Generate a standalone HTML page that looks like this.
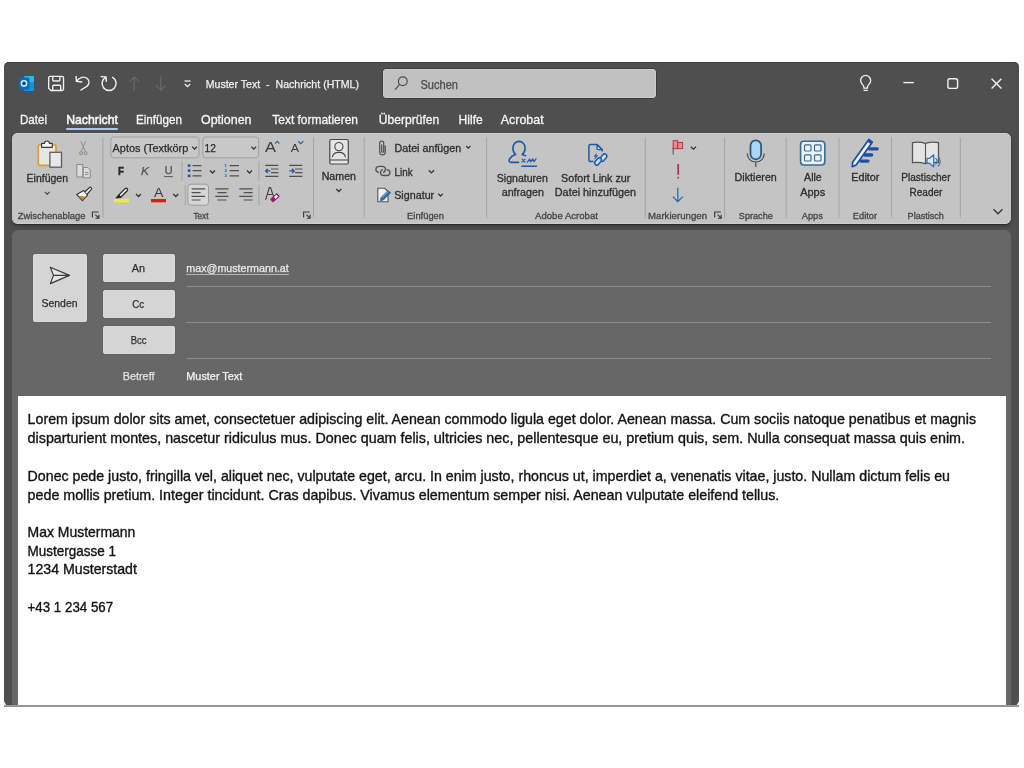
<!DOCTYPE html>
<html><head><meta charset="utf-8"><title>Muster Text - Nachricht (HTML)</title>
<style>
html,body{margin:0;padding:0;background:#fff;width:1024px;height:768px;overflow:hidden;font-family:"Liberation Sans", sans-serif;}
.abs{position:absolute;}
#win{left:4px;top:62px;width:1015px;height:644px;background:#4f4f4f;border-radius:5px 5px 6px 6px;box-shadow:inset 0 1px 0 #3e3e3e;}
#search{left:383px;top:69px;width:273px;height:29px;background:#c1c1c1;border-radius:4px;box-shadow:0 0 0 1px #3c3c3c, inset 0 0 0 1px #cbcbcb;}
#tabline{left:66px;top:127.5px;width:52px;height:2px;background:#a9c6e6;border-radius:1px;}
#ribbon{left:12px;top:133px;width:999px;height:91px;background:#c4c4c4;border-radius:6px;box-shadow:0 1px 0 #2c2c2c, 0 2px 4px rgba(0,0,0,0.3), inset 0 1px 0 #d0d0d0, inset 0 -1px 0 #cdcdcd;}
#compose{left:12px;top:230px;width:999px;height:476px;background:#676767;border-radius:6px 6px 0 0;}
.btn{background:#d5d5d5;border-radius:3px;box-shadow:inset 0 0 0 1px #dadada, 0 0 0 0.5px #5c5c5c;}
.hl{left:186px;width:805px;height:1px;background:#8e8e8e;}
#body{left:17.5px;top:395.5px;width:988px;height:310px;background:#fff;}
#bline{left:4px;top:705px;width:1015px;height:2px;background:#979797;}
svg{position:absolute;left:0;top:0;will-change:transform;}
</style></head><body>
<div id="win" class="abs"></div>
<div id="search" class="abs"></div>
<div id="tabline" class="abs"></div>
<div id="ribbon" class="abs"></div>
<div id="compose" class="abs"></div>
<div class="abs btn" style="left:33px;top:253.5px;width:53.5px;height:68px;"></div>
<div class="abs btn" style="left:102.5px;top:253.5px;width:72px;height:28px;"></div>
<div class="abs btn" style="left:102.5px;top:289.5px;width:72px;height:28px;"></div>
<div class="abs btn" style="left:102.5px;top:325.5px;width:72px;height:28px;"></div>
<div class="abs hl" style="top:286px"></div>
<div class="abs hl" style="top:322px"></div>
<div class="abs hl" style="top:358px"></div>
<div class="abs" style="left:186px;top:274px;width:103px;height:1px;background:#b4b4b4"></div>
<div id="body" class="abs"></div>
<div id="bline" class="abs"></div>
<svg width="1024" height="768" viewBox="0 0 1024 768" font-family='"Liberation Sans", sans-serif'>

<!-- Outlook logo -->
<rect x="24" y="76" width="10" height="15" rx="1" fill="#2fb4ee"/>
<path d="M24 84l10-2.5v9.5h-10z" fill="#1c8fd8"/>
<rect x="19.3" y="77.4" width="10.2" height="12.4" rx="2" fill="#0f68c0"/>
<circle cx="24" cy="83.4" r="2.6" fill="#0a3f80" stroke="#c4eeff" stroke-width="1.6"/>
<!-- save -->
<g fill="none" stroke="#f2f2f2" stroke-width="1.35" stroke-linejoin="round">
<path d="M50.3 76.4h11.8a1.4 1.4 0 0 1 1.4 1.4v11.3a1.4 1.4 0 0 1-1.4 1.4h-11.2l-2.2-2.2v-10.5a1.4 1.4 0 0 1 1.4-1.4z"/>
<path d="M52.7 76.5v3.6a0.9 0.9 0 0 0 0.9 0.9h5.4a0.9 0.9 0 0 0 0.9-0.9v-3.6"/>
<path d="M52.7 90.4v-4.2a1 1 0 0 1 1-1h6a1 1 0 0 1 1 1v4.2"/>
</g>
<!-- undo -->
<g fill="none" stroke="#f2f2f2" stroke-width="1.45" stroke-linecap="round" stroke-linejoin="round">
<path d="M76.6 81.2C79.5 77.2 84.2 75.8 87.3 78.6C89.6 80.8 89.2 84 87.2 86.1L81 90"/>
<path d="M76.1 76.5L76.4 81.4L81.8 82"/>
</g>
<!-- redo -->
<g fill="none" stroke="#f2f2f2" stroke-width="1.45" stroke-linecap="round" stroke-linejoin="round">
<path d="M105.6 77.4A7 7 0 1 0 112.6 77.4"/>
<path d="M101.3 76.6L106 76.9L106.3 81.2"/>
</g>
<!-- up/down dim -->
<g fill="none" stroke="#686868" stroke-width="1.2" stroke-linecap="round">
<path d="M134.2 90.6v-13.6M129.6 81.6l4.6-4.6l4.6 4.6"/>
<path d="M160.7 76.3v13.8M156 85.4l4.7 4.7l4.7-4.7"/>
</g>
<!-- customize -->
<g fill="none" stroke="#f0f0f0" stroke-width="1.3">
<path d="M184.5 81h6"/><path d="M184.8 84l2.7 2.7l2.7-2.7"/>
</g>
<!-- search -->
<g fill="none" stroke="#4a4a4a" stroke-width="1.2" stroke-linecap="round">
<circle cx="402.8" cy="81.2" r="4.4"/><path d="M399.6 84.4l-4.3 4.9"/>
</g>
<!-- bulb -->
<g fill="none" stroke="#f2f2f2" stroke-width="1.3" stroke-linecap="round" stroke-linejoin="round">
<path d="M863.8 88.2v-1.6c0-1.6-3.2-3-3.2-6.1a5.05 5.05 0 0 1 10.1 0c0 3.1-3.2 4.5-3.2 6.1v1.6z"/>
<path d="M864.2 90.4h3"/>
</g>
<!-- min max close -->
<g fill="none" stroke="#f2f2f2" stroke-width="1.4">
<path d="M903.4 82.6h10.4"/>
<rect x="947.9" y="78.8" width="9.7" height="9.6" rx="2"/>
<path d="M991.6 78.8l9.8 9.8M1001.4 78.8l-9.8 9.8"/>
</g>


<!-- paste clipboard -->
<rect x="38.3" y="144.8" width="17.7" height="20.6" rx="1.5" fill="#e6e6e6" stroke="#d2a232" stroke-width="1.7"/>
<path d="M41.6 147.3V143.4H44.5A2.45 2.45 0 0 1 49.4 143.4H52.3V147.3Z" fill="#fafafa" stroke="#3a3a3a" stroke-width="1.15" stroke-linejoin="round"/>
<rect x="49.9" y="152.3" width="11.6" height="14.9" fill="#e8e8e8" stroke="#5e5e5e" stroke-width="1.3"/>
<!-- chevron -->
<g fill="none" stroke="#444" stroke-width="1.1">
<path d="M44.8 191.8l2.4 2.4l2.4-2.4"/>
</g>
<!-- scissors -->
<g fill="none" stroke="#8c8c8c" stroke-width="1">
<path d="M80.9 141.2L85.4 151.6M85.7 141.2L81.2 151.6"/>
<circle cx="81" cy="153.2" r="1.5"/><circle cx="85.6" cy="153.2" r="1.5"/>
</g>
<!-- copy -->
<g fill="#dcdcdc" stroke="#8a8a8a" stroke-width="1">
<rect x="76.8" y="164.5" width="6" height="12.5"/>
<path d="M83.3 167.5h4.5l2.5 2.5v7.8h-7z"/>
<path d="M85 172.5h3.5M85 174.5h3.5" fill="none"/>
</g>
<!-- format painter -->
<path d="M76.7 194.4L83.7 190.5L87.6 195.2L82.4 200.7Z" fill="#f4f4f4" stroke="#333" stroke-width="1.15" stroke-linejoin="round"/>
<path d="M78 195.4L86.1 196.7L82.4 200.1Z" fill="#b88f2c"/>
<path d="M84.9 191.7L89.3 187.7A1.3 1.3 0 0 1 91.2 189.6L87.2 194" fill="#f0f0f0" stroke="#333" stroke-width="1.15" stroke-linejoin="round"/>
<!-- launchers -->
<g transform="translate(92,212)"><path d="M0.4 5.6V0H6.6M3.3 2.6L6.3 5.6M3.6 6.2H6.9V2.8" fill="none" stroke="#383838" stroke-width="1.15"/></g>
<g transform="translate(303.2,212)"><path d="M0.4 5.6V0H6.6M3.3 2.6L6.3 5.6M3.6 6.2H6.9V2.8" fill="none" stroke="#383838" stroke-width="1.15"/></g>
<g transform="translate(714.3,212)"><path d="M0.4 5.6V0H6.6M3.3 2.6L6.3 5.6M3.6 6.2H6.9V2.8" fill="none" stroke="#383838" stroke-width="1.15"/></g>
<!-- separators -->
<g stroke="#a4a4a4" stroke-width="1">
<path d="M102.9 137.5v80"/><path d="M313.5 137.5v80"/><path d="M364.2 137.5v80"/><path d="M486.6 137.5v80"/>
<path d="M645.3 137.5v80"/><path d="M724.6 137.5v80"/><path d="M786.2 137.5v80"/><path d="M839 137.5v80"/>
<path d="M891.5 137.5v80"/><path d="M960.3 137.5v80"/>
<path d="M182 161v20M258.9 161v20M185.3 185v20.5M258.9 185v20.5"/>
</g>
<!-- combo boxes -->
<rect x="110.8" y="137" width="88.2" height="20.8" rx="3" fill="#c8c8c8" stroke="#a0a0a0" stroke-width="1"/>
<rect x="202.8" y="137" width="55.8" height="20.8" rx="3" fill="#c8c8c8" stroke="#a0a0a0" stroke-width="1"/>
<g fill="none" stroke="#333" stroke-width="1.25">
<path d="M192.3 146.8l2.3 2.3l2.3-2.3"/><path d="M251.5 146.8l2.3 2.3l2.3-2.3"/>
<path d="M210 170.5l2.5 2.5l2.5-2.5"/><path d="M247 170.5l2.5 2.5l2.5-2.5"/>
<path d="M136 194l2.5 2.5l2.5-2.5"/><path d="M173.3 194l2.5 2.5l2.5-2.5"/>
<path d="M466.2 146l2.1 2.1l2.1-2.1"/><path d="M428.8 170.3l2.6 2.6l2.6-2.6"/><path d="M438.3 193.8l2.2 2.2l2.2-2.2"/>
<path d="M336.3 189l2.5 2.5l2.5-2.5"/><path d="M690.8 146.8l2.6 2.4l2.6-2.4"/>
<path d="M993.5 209.3l4.5 4.5l4.5-4.5"/>
</g>
<!-- grow/shrink font -->
<text x="265" y="151.8" font-size="15" fill="#3a3a3a" font-family='"Liberation Sans", sans-serif' textLength="11" lengthAdjust="spacingAndGlyphs">A</text>
<text x="290.8" y="151.8" font-size="11.5" fill="#3a3a3a" font-family='"Liberation Sans", sans-serif' textLength="8.3" lengthAdjust="spacingAndGlyphs">A</text>
<g fill="none" stroke="#2a649a" stroke-width="1.3">
<path d="M275 143.6l2.2-2.2l2.2 2.2"/><path d="M298.3 141.3l2.5 2.4l2.5-2.4"/>
</g>
<!-- bullets -->
<g transform="translate(0,0.7)">

<g fill="#1a5a9e"><rect x="187.8" y="163.6" width="2.6" height="2.6"/><rect x="187.8" y="168.6" width="2.6" height="2.6"/><rect x="187.8" y="173.8" width="2.6" height="2.6"/></g>
<g stroke="#505050" stroke-width="1.2"><path d="M192.5 164.9h9M192.5 169.9h9M192.5 175.1h9"/></g>
<g fill="#1a5a9e" font-size="4.2" font-family='"Liberation Sans", sans-serif' font-weight="700"><text x="224.5" y="166.5">1</text><text x="224.5" y="171.6">2</text><text x="224.5" y="176.7">3</text></g>
<g stroke="#505050" stroke-width="1.2"><path d="M229.6 164.9h9.4M229.6 170h9.4M229.6 175.2h9.4"/></g>
<!-- indent -->
<g stroke="#505050" stroke-width="1.2"><path d="M265.2 164.6h13.2M271 168.3h7.4M271 172h7.4M265.2 175.7h13.2"/>
<path d="M289.2 164.6h13.2M295 168.3h7.4M295 172h7.4M289.2 175.7h13.2"/></g>
<g stroke="#1a5a9e" stroke-width="1.3" fill="none"><path d="M265.5 170.2h4.8M267.8 168l-2.2 2.2l2.2 2.2"/>
<path d="M289.3 170.2h4.5M292 168l2.2 2.2l-2.2 2.2"/></g>
</g>
<path d="M164.2 176.6h8.6" stroke="#555" stroke-width="1"/>
<!-- highlight pen -->
<path d="M118.6 195.2l6.6-6.6a1.5 1.5 0 0 1 2.1 2.1l-6.6 6.6z" fill="#f6f6f6" stroke="#2a2a2a" stroke-width="1.3" stroke-linejoin="round"/>
<path d="M115.8 198.2l2.6-3.2l2.4 2.4z" fill="#1a1a1a" stroke="#1a1a1a" stroke-width="0.6"/>
<rect x="113.8" y="199" width="15.2" height="3.4" fill="#f2ec2a"/>
<!-- font color -->
<text x="154" y="197" font-size="12.5" fill="#3a3a3a" font-family='"Liberation Sans", sans-serif' textLength="9.4" lengthAdjust="spacingAndGlyphs">A</text>
<rect x="151" y="199" width="15" height="3.3" fill="#e21a1a"/>
<!-- align left button -->
<rect x="188" y="184.2" width="20.5" height="21" rx="3" fill="#d6d6d6" stroke="#9c9c9c" stroke-width="1"/>
<g stroke="#505050" stroke-width="1.2" transform="translate(0,0.3)">
<path d="M191.6 188.6h13.5M191.6 192.3h9M191.6 196h13.5M191.6 199.7h9"/>
<path d="M215.3 188.6h13.2M217.5 192.3h9M215.3 196h13.2M217.5 199.7h9"/>
<path d="M239.3 188.6h13.2M243.6 192.3h9M239.3 196h13.2M243.6 199.7h9"/>
</g>
<!-- clear formatting -->
<path d="M265.6 199.8l3.7-12.2h1.2l3.2 9.4M267.3 194.5h4.6" fill="none" stroke="#404040" stroke-width="1.1"/>
<rect x="270.2" y="195.5" width="9.4" height="4.6" rx="0.8" transform="rotate(-42 274.9 197.8)" fill="#931c6e"/>
<rect x="274.6" y="196.6" width="3.6" height="2.4" transform="rotate(-42 274.9 197.8)" fill="#f6eef4"/>
<!-- Namen book -->
<rect x="329.8" y="139.5" width="18.5" height="24.5" rx="1.5" fill="#e4e4e4" stroke="#4a4a4a" stroke-width="1.2"/>
<path d="M330 160h18" stroke="#4a4a4a" stroke-width="1.1"/>
<circle cx="338.9" cy="146.6" r="4.1" fill="none" stroke="#4a4a4a" stroke-width="1.15"/>
<path d="M332.4 157.3C332.8 154.1 335.5 152.4 338.9 152.4C342.3 152.4 345 154.1 345.4 157.3" fill="none" stroke="#4a4a4a" stroke-width="1.15"/>
<!-- paperclip -->
<path d="M384.8 146v6.5a2.8 2.8 0 0 1-5.6 0v-9a2 2 0 0 1 4 0v8.2a1 1 0 0 1-2 0v-6.7" fill="none" stroke="#555" stroke-width="1.25" transform="translate(0.5,-0.5)"/>
<!-- link -->
<g fill="none" stroke="#505050" stroke-width="1.35" stroke-linecap="round">
<path d="M378.4 172.4C376.7 172 375.9 170.8 375.9 169.5C375.9 167.6 377.4 166.4 379.5 166.4H382C384 166.4 385.4 167.8 385.4 169.5C385.4 170.8 384.6 171.8 383.5 172.3"/>
<path d="M387.1 169.6C389 170 389.9 171.1 389.9 172.5C389.9 174.4 388.5 175.5 386.5 175.5H384C382 175.5 380.5 174.3 380.5 172.5C380.5 171.2 381.3 170.2 382.4 169.7"/>
</g>
<!-- signature -->
<path d="M377.8 188.2h6.8l3.4 3.4v10.2h-10.2z" fill="#f0f0f0" stroke="#555" stroke-width="1.1" stroke-linejoin="round"/>
<path d="M380.3 200.8L381 197.6L388.2 190.4L390.6 192.8L383.4 200Z" fill="#2e6cb0" stroke="#1f5a9a" stroke-width="0.7" stroke-linejoin="round"/>
<path d="M382.2 197.6L388.4 191.4" stroke="#cfe2f6" stroke-width="0.6"/>
<!-- Signaturen anfragen -->
<path d="M518.5 162.4H511.2C509.2 162.4 508.6 160.6 509.6 159C511 156.6 513.4 155.2 515.6 154.6C513.7 152.9 512.9 150.6 512.9 148C512.9 144.3 515.6 141.4 519 141.4C522.4 141.4 525.1 144.3 525.1 148C525.1 150.6 524.1 152.9 522.2 154.6C523.2 155 524.5 155.5 525.6 155.7" fill="none" stroke="#1f58a8" stroke-width="1.6" stroke-linecap="round" stroke-linejoin="round"/>
<g fill="none" stroke="#1f58a8" stroke-width="1.2" stroke-linecap="round"><path d="M522 159.2l3 3M525 159.2l-3 3M527.3 162.2l2.2-3l1.2 2.6l2-2.8l1.3 2.6l2-2.8"/></g>
<path d="M521.3 166.2h15.6" stroke="#1f58a8" stroke-width="1.5"/>
<!-- Sofort link -->
<path d="M593.5 161.6H590.5A1.6 1.6 0 0 1 588.9 160V146.2A1.6 1.6 0 0 1 590.5 144.6H597.2L602.2 149.6V151.6" fill="none" stroke="#1f58a8" stroke-width="1.5" stroke-linejoin="round"/>
<path d="M597 144.9V148.6A1 1 0 0 0 598 149.6H601.9Z" fill="#c4e2ff" stroke="#1f58a8" stroke-width="1.3" stroke-linejoin="round"/>
<path d="M596.4 153.5L594 156.6H596L594.6 159.2L597.8 155.5H595.8Z" fill="#1f58a8" stroke="#1f58a8" stroke-width="0.5" stroke-linejoin="round"/>
<rect x="599.3" y="155.6" width="8.2" height="4.3" rx="2.15" transform="rotate(-50 603.3 157.7)" fill="#d4eaff" stroke="#1f58a8" stroke-width="1.45"/>
<rect x="594" y="159.4" width="8.2" height="4.3" rx="2.15" transform="rotate(-50 598 161.5)" fill="#d4eaff" fill-opacity="0.6" stroke="#1f58a8" stroke-width="1.45"/>
<!-- flag -->
<path d="M673.2 147v7.6" stroke="#6a6a6a" stroke-width="1.3"/>
<rect x="673.2" y="140.7" width="4.6" height="7.9" fill="#f08890" stroke="#b03848" stroke-width="1"/>
<rect x="677.8" y="142.5" width="4.8" height="6.1" fill="#f08890" stroke="#b03848" stroke-width="1"/>
<!-- exclamation -->
<path d="M678.2 164v10.8" stroke="#a83848" stroke-width="1.8"/><rect x="677.3" y="176.8" width="1.8" height="1.7" fill="#a83848"/>
<!-- arrow down -->
<path d="M677.8 187.8v13.6M672.8 196.6l5 5l5-5" fill="none" stroke="#2a6aa4" stroke-width="1.25"/>
<!-- mic -->
<rect x="750.5" y="140.3" width="10.6" height="19" rx="5.3" fill="#acd6f6" stroke="#2a5478" stroke-width="1.7"/>
<path d="M747.3 153.6C747.3 158.5 751 162 755.8 162C760.6 162 764.3 158.5 764.3 153.6M755.8 162v5" fill="none" stroke="#4a4a4a" stroke-width="1.2"/>
<!-- apps -->
<rect x="800.6" y="141.2" width="24.2" height="23.8" rx="3.2" fill="#eaf2fa" stroke="#3a6a96" stroke-width="1.6"/>
<g fill="none" stroke="#3a6a96" stroke-width="1.2">
<rect x="804.5" y="144.8" width="6.5" height="6.2" rx="1"/><rect x="814.5" y="144.8" width="6.5" height="6.2" rx="1"/>
<rect x="804.5" y="154.8" width="6.5" height="6.2" rx="1"/><rect x="814.5" y="154.8" width="6.5" height="6.2" rx="1"/>
</g>
<!-- editor -->
<g stroke="#1f4fa0" stroke-width="3.3" stroke-linecap="round"><path d="M869.5 148.8H877.2M865 155H871.6M861 161.1H868"/></g>
<path d="M852.3 166.6L852.5 162.4L868.8 139.5L872.4 142.1L856.1 165Z" fill="#eef2fa" stroke="#1f4fa0" stroke-width="1.7" stroke-linejoin="round"/>
<path d="M868.4 140.9L871.8 143.3" stroke="#1f4fa0" stroke-width="2.4"/>
<!-- reader -->
<path d="M912.5 142.6Q919 141.2 925.5 143.4Q932 141.2 938.5 142.6V162.6Q932 161.8 925.5 163.6Q919 161.8 912.5 162.6Z" fill="#e4e4e4" stroke="#555" stroke-width="1.25" stroke-linejoin="round"/>
<path d="M925.5 143.4V163.4" stroke="#555" stroke-width="1.1"/>
<path d="M927 158.4h2.5l4.2-3.6v12l-4.2-3.6h-2.5z" fill="#d8ecf8" stroke="#3a72a8" stroke-width="1.3" stroke-linejoin="round"/>
<path d="M935.8 158.3a4.2 4.2 0 0 1 0 5.6M938.2 156.3a7.2 7.2 0 0 1 0 9.8" fill="none" stroke="#3a72a8" stroke-width="1.2" stroke-linecap="round"/>
<!-- send -->
<path d="M50.3 267.3l19.2 8.1l-19.2 8.2l3.2-8.2z M53.5 275.4h15.9" fill="#e6e6e6" stroke="#3a3a3a" stroke-width="1.2" stroke-linejoin="round"/>

<text x="205.7" y="88.3" font-size="11.6" fill="#f2f2f2" stroke="#f2f2f2" stroke-width="0.25" font-weight="400" textLength="153.3" lengthAdjust="spacingAndGlyphs" xml:space="preserve">Muster Text  -  Nachricht (HTML)</text>
<text x="420.4" y="88.6" font-size="12.2" fill="#4a4a4a" stroke="#4a4a4a" stroke-width="0.25" font-weight="400" textLength="37.6" lengthAdjust="spacingAndGlyphs" xml:space="preserve">Suchen</text>
<text x="20.0" y="124.4" font-size="13" fill="#f6f6f6" stroke="#f6f6f6" stroke-width="0.3" font-weight="400" textLength="27.0" lengthAdjust="spacingAndGlyphs" xml:space="preserve">Datei</text>
<text x="66.2" y="124.4" font-size="13" fill="#f6f6f6" stroke="#f6f6f6" stroke-width="0.55" font-weight="400" textLength="51.8" lengthAdjust="spacingAndGlyphs" xml:space="preserve">Nachricht</text>
<text x="136.0" y="124.4" font-size="13" fill="#f6f6f6" stroke="#f6f6f6" stroke-width="0.3" font-weight="400" textLength="46.0" lengthAdjust="spacingAndGlyphs" xml:space="preserve">Einfügen</text>
<text x="201.0" y="124.4" font-size="13" fill="#f6f6f6" stroke="#f6f6f6" stroke-width="0.3" font-weight="400" textLength="50.5" lengthAdjust="spacingAndGlyphs" xml:space="preserve">Optionen</text>
<text x="272.3" y="124.4" font-size="13" fill="#f6f6f6" stroke="#f6f6f6" stroke-width="0.3" font-weight="400" textLength="85.7" lengthAdjust="spacingAndGlyphs" xml:space="preserve">Text formatieren</text>
<text x="378.7" y="124.4" font-size="13" fill="#f6f6f6" stroke="#f6f6f6" stroke-width="0.3" font-weight="400" textLength="60.6" lengthAdjust="spacingAndGlyphs" xml:space="preserve">Überprüfen</text>
<text x="458.6" y="124.4" font-size="13" fill="#f6f6f6" stroke="#f6f6f6" stroke-width="0.3" font-weight="400" textLength="24.1" lengthAdjust="spacingAndGlyphs" xml:space="preserve">Hilfe</text>
<text x="500.8" y="124.4" font-size="13" fill="#f6f6f6" stroke="#f6f6f6" stroke-width="0.3" font-weight="400" textLength="42.8" lengthAdjust="spacingAndGlyphs" xml:space="preserve">Acrobat</text>
<text x="17.8" y="218.5" font-size="9.8" fill="#444444" stroke="#444444" stroke-width="0.3" font-weight="400" textLength="67.7" lengthAdjust="spacingAndGlyphs" xml:space="preserve">Zwischenablage</text>
<text x="193.4" y="218.5" font-size="9.8" fill="#444444" stroke="#444444" stroke-width="0.3" font-weight="400" textLength="15.1" lengthAdjust="spacingAndGlyphs" xml:space="preserve">Text</text>
<text x="407.1" y="218.5" font-size="9.8" fill="#444444" stroke="#444444" stroke-width="0.3" font-weight="400" textLength="36.9" lengthAdjust="spacingAndGlyphs" xml:space="preserve">Einfügen</text>
<text x="535.1" y="218.5" font-size="9.8" fill="#444444" stroke="#444444" stroke-width="0.3" font-weight="400" textLength="62.8" lengthAdjust="spacingAndGlyphs" xml:space="preserve">Adobe Acrobat</text>
<text x="648.0" y="218.5" font-size="9.8" fill="#444444" stroke="#444444" stroke-width="0.3" font-weight="400" textLength="59.0" lengthAdjust="spacingAndGlyphs" xml:space="preserve">Markierungen</text>
<text x="738.8" y="218.5" font-size="9.8" fill="#444444" stroke="#444444" stroke-width="0.3" font-weight="400" textLength="34.0" lengthAdjust="spacingAndGlyphs" xml:space="preserve">Sprache</text>
<text x="801.8" y="218.5" font-size="9.8" fill="#444444" stroke="#444444" stroke-width="0.3" font-weight="400" textLength="21.1" lengthAdjust="spacingAndGlyphs" xml:space="preserve">Apps</text>
<text x="852.8" y="218.5" font-size="9.8" fill="#444444" stroke="#444444" stroke-width="0.3" font-weight="400" textLength="24.3" lengthAdjust="spacingAndGlyphs" xml:space="preserve">Editor</text>
<text x="907.6" y="218.5" font-size="9.8" fill="#444444" stroke="#444444" stroke-width="0.3" font-weight="400" textLength="36.3" lengthAdjust="spacingAndGlyphs" xml:space="preserve">Plastisch</text>
<text x="26.6" y="182.2" font-size="10.2" fill="#2e2e2e" stroke="#2e2e2e" stroke-width="0.3" font-weight="400" textLength="41.4" lengthAdjust="spacingAndGlyphs" xml:space="preserve">Einfügen</text>
<text x="321.7" y="179.7" font-size="10.2" fill="#2e2e2e" stroke="#2e2e2e" stroke-width="0.3" font-weight="400" textLength="34.3" lengthAdjust="spacingAndGlyphs" xml:space="preserve">Namen</text>
<text x="394.5" y="152.0" font-size="10.2" fill="#2e2e2e" stroke="#2e2e2e" stroke-width="0.3" font-weight="400" textLength="66.7" lengthAdjust="spacingAndGlyphs" xml:space="preserve">Datei anfügen</text>
<text x="394.5" y="175.5" font-size="10.2" fill="#2e2e2e" stroke="#2e2e2e" stroke-width="0.3" font-weight="400" textLength="18.1" lengthAdjust="spacingAndGlyphs" xml:space="preserve">Link</text>
<text x="394.2" y="199.0" font-size="10.2" fill="#2e2e2e" stroke="#2e2e2e" stroke-width="0.3" font-weight="400" textLength="40.0" lengthAdjust="spacingAndGlyphs" xml:space="preserve">Signatur</text>
<text x="496.8" y="181.9" font-size="10.2" fill="#2e2e2e" stroke="#2e2e2e" stroke-width="0.3" font-weight="400" textLength="51.0" lengthAdjust="spacingAndGlyphs" xml:space="preserve">Signaturen</text>
<text x="501.7" y="195.8" font-size="10.2" fill="#2e2e2e" stroke="#2e2e2e" stroke-width="0.3" font-weight="400" textLength="42.2" lengthAdjust="spacingAndGlyphs" xml:space="preserve">anfragen</text>
<text x="561.0" y="181.9" font-size="10.2" fill="#2e2e2e" stroke="#2e2e2e" stroke-width="0.3" font-weight="400" textLength="69.4" lengthAdjust="spacingAndGlyphs" xml:space="preserve">Sofort Link zur</text>
<text x="554.8" y="195.8" font-size="10.2" fill="#2e2e2e" stroke="#2e2e2e" stroke-width="0.3" font-weight="400" textLength="81.2" lengthAdjust="spacingAndGlyphs" xml:space="preserve">Datei hinzufügen</text>
<text x="734.6" y="181.0" font-size="10.2" fill="#2e2e2e" stroke="#2e2e2e" stroke-width="0.3" font-weight="400" textLength="42.2" lengthAdjust="spacingAndGlyphs" xml:space="preserve">Diktieren</text>
<text x="804.1" y="181.0" font-size="10.2" fill="#2e2e2e" stroke="#2e2e2e" stroke-width="0.3" font-weight="400" textLength="17.6" lengthAdjust="spacingAndGlyphs" xml:space="preserve">Alle</text>
<text x="800.2" y="195.7" font-size="10.2" fill="#2e2e2e" stroke="#2e2e2e" stroke-width="0.3" font-weight="400" textLength="25.0" lengthAdjust="spacingAndGlyphs" xml:space="preserve">Apps</text>
<text x="851.2" y="181.2" font-size="10.2" fill="#2e2e2e" stroke="#2e2e2e" stroke-width="0.3" font-weight="400" textLength="28.2" lengthAdjust="spacingAndGlyphs" xml:space="preserve">Editor</text>
<text x="901.3" y="181.2" font-size="10.2" fill="#2e2e2e" stroke="#2e2e2e" stroke-width="0.3" font-weight="400" textLength="49.2" lengthAdjust="spacingAndGlyphs" xml:space="preserve">Plastischer</text>
<text x="909.6" y="195.8" font-size="10.2" fill="#2e2e2e" stroke="#2e2e2e" stroke-width="0.3" font-weight="400" textLength="32.7" lengthAdjust="spacingAndGlyphs" xml:space="preserve">Reader</text>
<text x="112.6" y="151.6" font-size="11" fill="#2a2a2a" stroke="#2a2a2a" stroke-width="0.25" font-weight="400" textLength="75.6" lengthAdjust="spacingAndGlyphs" xml:space="preserve">Aptos (Textkörp</text>
<text x="204.6" y="151.6" font-size="11" fill="#2a2a2a" stroke="#2a2a2a" stroke-width="0.25" font-weight="400" textLength="11.3" lengthAdjust="spacingAndGlyphs" xml:space="preserve">12</text>
<text x="118.0" y="174.6" font-size="11.5" fill="#2a2a2a" stroke="#2a2a2a" stroke-width="0.5" font-weight="700" textLength="6.0" lengthAdjust="spacingAndGlyphs" xml:space="preserve">F</text>
<text x="141.0" y="174.6" font-size="11.5" fill="#555" stroke="#555" stroke-width="0.25" font-weight="400" textLength="8.0" lengthAdjust="spacingAndGlyphs" xml:space="preserve" font-style="italic">K</text>
<text x="164.4" y="174.0" font-size="11.5" fill="#555" stroke="#555" stroke-width="0.25" font-weight="400" textLength="8.2" lengthAdjust="spacingAndGlyphs" xml:space="preserve">U</text>
<text x="41.5" y="306.6" font-size="11.2" fill="#2e2e2e" stroke="#2e2e2e" stroke-width="0.25" font-weight="400" textLength="36.0" lengthAdjust="spacingAndGlyphs" xml:space="preserve">Senden</text>
<text x="131.8" y="271.9" font-size="11" fill="#2e2e2e" stroke="#2e2e2e" stroke-width="0.25" font-weight="400" textLength="13.3" lengthAdjust="spacingAndGlyphs" xml:space="preserve">An</text>
<text x="132.2" y="308.0" font-size="11" fill="#2e2e2e" stroke="#2e2e2e" stroke-width="0.25" font-weight="400" textLength="11.9" lengthAdjust="spacingAndGlyphs" xml:space="preserve">Cc</text>
<text x="130.8" y="343.8" font-size="11" fill="#2e2e2e" stroke="#2e2e2e" stroke-width="0.25" font-weight="400" textLength="15.8" lengthAdjust="spacingAndGlyphs" xml:space="preserve">Bcc</text>
<text x="186.3" y="272.0" font-size="11" fill="#ececec" stroke="#ececec" stroke-width="0.25" font-weight="400" textLength="102.5" lengthAdjust="spacingAndGlyphs" xml:space="preserve">max@mustermann.at</text>
<text x="122.7" y="380.4" font-size="11" fill="#e2e2e2" stroke="#e2e2e2" stroke-width="0.25" font-weight="400" textLength="31.8" lengthAdjust="spacingAndGlyphs" xml:space="preserve">Betreff</text>
<text x="186.3" y="380.4" font-size="11" fill="#f4f4f4" stroke="#f4f4f4" stroke-width="0.25" font-weight="400" textLength="56.0" lengthAdjust="spacingAndGlyphs" xml:space="preserve">Muster Text</text>
<text x="27.6" y="424.3" font-size="13.9" fill="#141414" stroke="#141414" stroke-width="0.35" font-weight="400" textLength="948.4" lengthAdjust="spacingAndGlyphs" xml:space="preserve">Lorem ipsum dolor sits amet, consectetuer adipiscing elit. Aenean commodo ligula eget dolor. Aenean massa. Cum sociis natoque penatibus et magnis</text>
<text x="27.6" y="443.3" font-size="13.9" fill="#141414" stroke="#141414" stroke-width="0.35" font-weight="400" textLength="937.4" lengthAdjust="spacingAndGlyphs" xml:space="preserve">disparturient montes, nascetur ridiculus mus. Donec quam felis, ultricies nec, pellentesque eu, pretium quis, sem. Nulla consequat massa quis enim.</text>
<text x="27.6" y="481.2" font-size="13.9" fill="#141414" stroke="#141414" stroke-width="0.35" font-weight="400" textLength="922.4" lengthAdjust="spacingAndGlyphs" xml:space="preserve">Donec pede justo, fringilla vel, aliquet nec, vulputate eget, arcu. In enim justo, rhoncus ut, imperdiet a, venenatis vitae, justo. Nullam dictum felis eu</text>
<text x="27.6" y="500.2" font-size="13.9" fill="#141414" stroke="#141414" stroke-width="0.35" font-weight="400" textLength="751.7" lengthAdjust="spacingAndGlyphs" xml:space="preserve">pede mollis pretium. Integer tincidunt. Cras dapibus. Vivamus elementum semper nisi. Aenean vulputate eleifend tellus.</text>
<text x="27.6" y="536.8" font-size="13.9" fill="#141414" stroke="#141414" stroke-width="0.35" font-weight="400" textLength="107.8" lengthAdjust="spacingAndGlyphs" xml:space="preserve">Max Mustermann</text>
<text x="27.6" y="555.5" font-size="13.9" fill="#141414" stroke="#141414" stroke-width="0.35" font-weight="400" textLength="88.4" lengthAdjust="spacingAndGlyphs" xml:space="preserve">Mustergasse 1</text>
<text x="27.6" y="574.3" font-size="13.9" fill="#141414" stroke="#141414" stroke-width="0.35" font-weight="400" textLength="109.3" lengthAdjust="spacingAndGlyphs" xml:space="preserve">1234 Musterstadt</text>
<text x="27.6" y="612.0" font-size="13.9" fill="#141414" stroke="#141414" stroke-width="0.35" font-weight="400" textLength="85.5" lengthAdjust="spacingAndGlyphs" xml:space="preserve">+43 1 234 567</text>
</svg>
</body></html>
